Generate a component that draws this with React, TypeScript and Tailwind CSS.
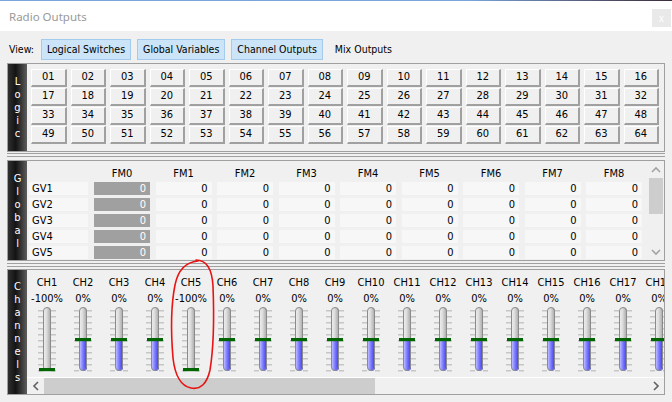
import React from "react";

const LOGIC = Array.from({ length: 64 }, (_, i) => String(i + 1).padStart(2, "0"));
const FMS = Array.from({ length: 9 }, (_, i) => `FM${i}`);
const GVS = ["GV1", "GV2", "GV3", "GV4", "GV5"];
const CHANNELS = Array.from({ length: 18 }, (_, i) => ({
  name: `CH${i + 1}`,
  value: i === 0 || i === 4 ? -100 : 0,
}));

const uiFont = "font-[family-name:'DejaVu_Sans_Condensed','Liberation_Sans',sans-serif]";

function SideLabel({ text }: { text: string }) {
  return (
    <div className="w-[19px] flex-none flex flex-col items-center justify-center bg-linear-to-r from-[#303030] via-[#141414] via-40% to-[#5e5e5e] text-white text-[11px] leading-[13px]">
      {text.split("").map((c, i) => (
        <span key={i}>{c}</span>
      ))}
    </div>
  );
}

function Chevron({ dir, color }: { dir: "up" | "down" | "left" | "right"; color: string }) {
  const paths = {
    up: "M1 6 L5 2 L9 6",
    down: "M1 2 L5 6 L9 2",
    left: "M6 1 L2 5 L6 9",
    right: "M2 1 L6 5 L2 9",
  };
  const vertical = dir === "up" || dir === "down";
  return (
    <svg width={vertical ? 10 : 8} height={vertical ? 8 : 10} viewBox={vertical ? "0 0 10 8" : "0 0 8 10"}>
      <path d={paths[dir]} fill="none" stroke={color} strokeWidth="1.6" />
    </svg>
  );
}

function Separator({ gapTop }: { gapTop: string }) {
  return (
    <div className={gapTop}>
      <div className="h-px bg-[#a0a0a0]" />
      <div className="h-px mt-[2px] bg-[#a0a0a0]" />
    </div>
  );
}

// vertical fader: value -100..100, knob travels over the track
function Fader({ value, id }: { value: number; id: number }) {
  const offset = Math.round(((100 - value) / 200) * 61);
  const knobY = 1 + offset;
  const ticks = Array.from({ length: 11 }, (_, k) => 4 + k * 6);
  return (
    <svg width="36" height="66" viewBox="0 0 36 66">
      <defs>
        <linearGradient id={`g${id}`} x1="0" y1="0" x2="1" y2="0">
          <stop offset="0" stopColor="#f2f2f2" />
          <stop offset="0.45" stopColor="#dcdcdc" />
          <stop offset="1" stopColor="#a4a4a4" />
        </linearGradient>
        <linearGradient id={`b${id}`} x1="0" y1="0" x2="1" y2="0">
          <stop offset="0" stopColor="#d2d2ff" />
          <stop offset="0.5" stopColor="#7a7aff" />
          <stop offset="1" stopColor="#3838ee" />
        </linearGradient>
        <clipPath id={`c${id}`}>
          <rect x="14" y="1" width="8" height="64" rx="4" />
        </clipPath>
      </defs>
      {ticks.map((y) => (
        <g key={y} fill="#c6c6c6">
          <rect x="9" y={y} width="5" height="1.5" />
          <rect x="22" y={y} width="5" height="1.5" />
        </g>
      ))}
      <rect x="14" y="1" width="8" height="64" rx="4" fill={`url(#g${id})`} />
      <rect
        x="14"
        y={knobY + 3}
        width="8"
        height={Math.max(0, 65 - knobY - 3)}
        fill={`url(#b${id})`}
        clipPath={`url(#c${id})`}
      />
      <rect x="14.5" y="1.5" width="7" height="63" rx="3.5" fill="none" stroke="#8a8a8a" />
      <rect x="10" y={knobY} width="16" height="3.2" fill="#006400" />
    </svg>
  );
}

export default function App() {
  return (
    <div className={`w-[672px] h-[402px] bg-[#f0f0f0] overflow-hidden relative text-black text-[11px] ${uiFont}`}>
      {/* window caption */}
      <div className="h-px bg-linear-to-r from-[#78a4dc] via-[#78a4dc] via-70% to-[#3a2c3a]" />
      <div className="h-[30px] bg-white flex items-start justify-between">
        <span className="ml-[9px] mt-[7px] text-[11.5px] text-[#999] font-[family-name:'Noto_Sans',sans-serif]">
          Radio Outputs
        </span>
        <div className="mt-[8px] mr-px w-[19px] h-[18px] bg-[#e9e9e9] flex items-center justify-center text-[10px] text-white">
          x
        </div>
      </div>

      {/* view toggles */}
      <div className="h-[32px] pt-[8px] pl-[9px] flex items-start text-[10.5px]">
        <span className="h-[21px] flex items-center mr-[7px]">View:</span>
        <div className="flex gap-[6px]">
          {["Logical Switches", "Global Variables", "Channel Outputs"].map((t) => (
            <div
              key={t}
              className="h-[21px] px-[5px] flex items-center border border-[#a4cbee] bg-[#cce4f7]"
            >
              {t}
            </div>
          ))}
          <div className="h-[21px] px-[5px] flex items-center border border-transparent">Mix Outputs</div>
        </div>
      </div>

      <div className="px-[7px]">
        {/* logical switches */}
        <div className="h-[89px] border border-[#a0a0a0] flex">
          <SideLabel text="Logic" />
          <div className="flex-1 pl-[4px] pr-[5px] pt-[5px]">
            <div className="grid grid-cols-16 gap-x-[4px] gap-y-px">
              {LOGIC.map((n) => (
                <div
                  key={n}
                  className="h-[18px] flex items-center justify-center bg-[#f0f0f0] border-t border-l border-white border-r-2 border-b-2 border-r-[#a0a0a0] border-b-[#a0a0a0]"
                >
                  {n}
                </div>
              ))}
            </div>
          </div>
        </div>

        <Separator gapTop="mt-px" />

        {/* global variables */}
        <div className="mt-[3px] h-[101px] border border-[#a0a0a0] flex">
          <SideLabel text="Global" />
          <div className="flex-1 overflow-hidden">
            <div className="h-[21px] flex pl-[2px] pt-[6px] leading-[13px]">
              <div className="w-[59px] flex-none" />
              <div className="ml-[6px] flex gap-[5.5px]">
                {FMS.map((f) => (
                  <div key={f} className="w-[56px] flex-none text-center">
                    {f}
                  </div>
                ))}
              </div>
            </div>
            <div className="flex flex-col gap-[3px] leading-[13px]">
              {GVS.map((g) => (
                <div key={g} className="h-[13px] flex pl-[2px]">
                  <div className="w-[59px] flex-none bg-[#f7f7f7] pl-[3px]">{g}</div>
                  <div className="ml-[6px] flex gap-[5.5px]">
                    {FMS.map((f, i) => (
                      <div
                        key={f}
                        className={
                          i === 0
                            ? "w-[56px] flex-none bg-[#a0a0a0] text-white text-right pr-[4px]"
                            : "w-[56px] flex-none bg-[#f7f7f7] text-right pr-[4px]"
                        }
                      >
                        0
                      </div>
                    ))}
                  </div>
                </div>
              ))}
            </div>
          </div>
          <div className="w-[16px] flex-none flex flex-col bg-[#f0f0f0]">
            <div className="h-[17px] flex items-center justify-center">
              <Chevron dir="up" color="#a3a3a3" />
            </div>
            <div className="h-[36px] mx-px bg-[#cdcdcd]" />
            <div className="flex-1" />
            <div className="h-[17px] flex items-center justify-center">
              <Chevron dir="down" color="#a3a3a3" />
            </div>
          </div>
        </div>

        <Separator gapTop="mt-[2px]" />

        {/* channel outputs */}
        <div className="mt-[2px] h-[126px] border border-[#a0a0a0] flex">
          <SideLabel text="Channels" />
          <div className="flex-1 min-w-0 flex flex-col">
            <div className="h-[107px] flex pl-[2px] overflow-hidden leading-[13px]">
              {CHANNELS.map((ch, i) => (
                <div key={ch.name} className="w-[36px] flex-none flex flex-col items-center pt-[6px]">
                  <span className="whitespace-nowrap">{ch.name}</span>
                  <span className="mt-[3px] whitespace-nowrap">{ch.value}%</span>
                  <div className="mt-px">
                    <Fader value={ch.value} id={i} />
                  </div>
                </div>
              ))}
            </div>
            <div className="h-[17px] border-t border-white flex bg-[#f0f0f0]">
              <div className="w-[17px] flex items-center justify-center">
                <Chevron dir="left" color="#606060" />
              </div>
              <div className="w-[331px] bg-[#cdcdcd]" />
              <div className="flex-1" />
              <div className="w-[17px] flex items-center justify-center">
                <Chevron dir="right" color="#606060" />
              </div>
            </div>
          </div>
        </div>
      </div>

      {/* hand-drawn red marking around CH5 */}
      <svg className="absolute inset-0 pointer-events-none" width="672" height="402" viewBox="0 0 672 402">
        <path
          d="M196 260 C206 260 212 268 213 286 C214 312 214 346 210 370 C207 384 200 390 191 388 C181 386 175 376 173 358 C171 334 171 305 175 285 C178 270 186 262 198 261"
          fill="none"
          stroke="#e81414"
          strokeWidth="1.6"
          strokeLinecap="round"
        />
      </svg>
    </div>
  );
}
